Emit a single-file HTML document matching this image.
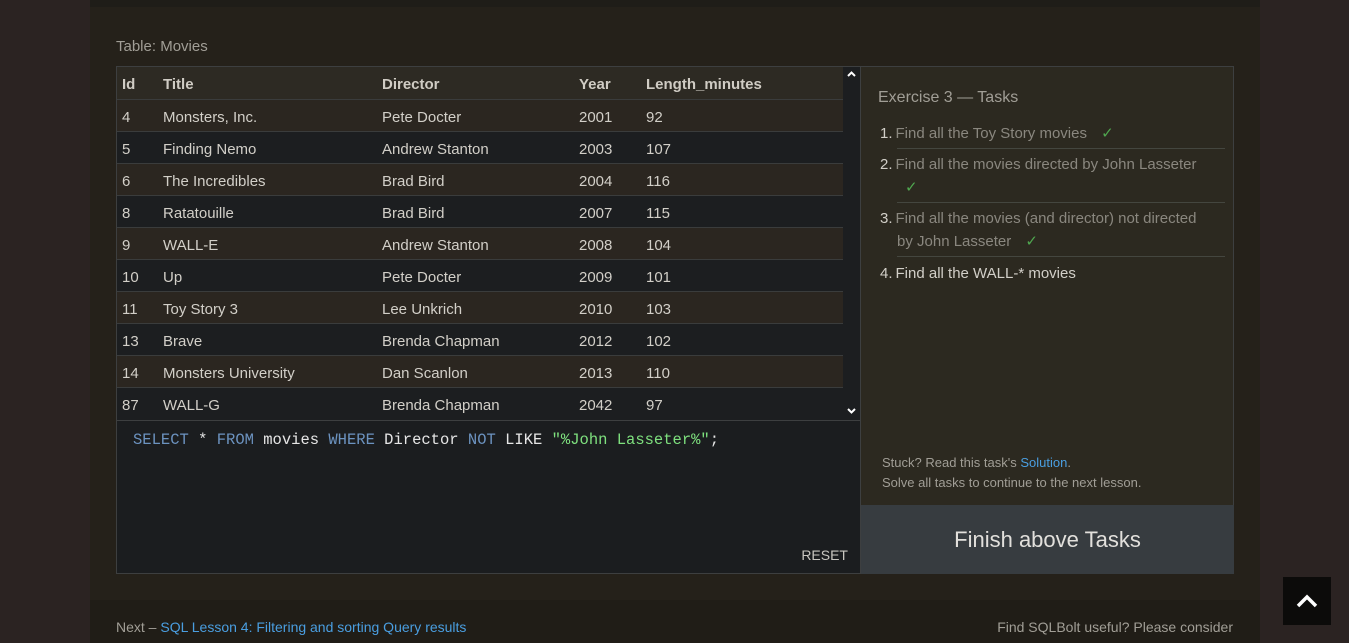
<!DOCTYPE html>
<html><head><style>
*{margin:0;padding:0;box-sizing:border-box}
body{width:1349px;height:643px;overflow:hidden;background:#2b2322;font-family:"Liberation Sans",sans-serif;position:relative}
.main{position:absolute;left:90px;top:0;width:1170px;height:643px;background:#25211a}
.topband{position:absolute;left:90px;top:0;width:1170px;height:7px;background:#1f1d18}
.foot{position:absolute;left:90px;top:600px;width:1170px;height:43px;background:#201d17}
.lbl{position:absolute;left:116px;top:38px;color:#a19e96;font-size:15px}
.tbl{position:absolute;left:116px;top:66px;width:745px;height:355px;border:1px solid #3d3f40;background:#1c1e20;overflow:hidden}
.row{position:absolute;left:0;width:726px;height:32px;border-bottom:1px solid #3a3c3c;color:#d2cfc8;font-size:15px}
.row span{position:absolute;top:9px}
.hd{background:#2d2a23;font-weight:bold;color:#d0ccc4;top:0;height:33px}
.odd{background:#2b2620}.even{background:#1c1e20}
.sb{position:absolute;left:726px;top:0;width:17px;height:355px;background:#1c1e20}
.ed{position:absolute;left:116px;top:420px;width:745px;height:154px;border:1px solid #3d3f40;background:#1b1d1f;font-family:"Liberation Mono",monospace;font-size:15.5px}
.code{position:absolute;left:16px;top:10px;color:#e6e6e6;white-space:pre}
.k{color:#6c93c0}.s{color:#7ee07e}
.reset{position:absolute;right:12px;bottom:10px;font-family:"Liberation Sans",sans-serif;font-size:14px;color:#c8c6c0}
.tp{position:absolute;left:861px;top:66px;width:373px;height:440px;background:#2c2920;border:1px solid #3d3f40;border-left:none;border-bottom:none}
.tp h3{position:absolute;left:17px;top:22px;font-weight:normal;font-size:16px;color:#a19e96}
.t{position:absolute;left:19px;width:345px;font-size:15px;color:#8a877f;line-height:23px}
.t b{font-weight:normal;color:#d2cfc8;margin-right:3px}
.t i{font-style:normal;padding-left:17px;display:block}
.t .ck{color:#4fa64f;margin-left:10px}
.ln{position:absolute;left:36px;width:328px;height:1px;background:#44463f}
.stuck{position:absolute;left:21px;top:386px;font-size:13px;color:#a19e96;line-height:20px}
.stuck a{color:#4a9ee0}
.btn{position:absolute;left:861px;top:505px;width:373px;height:69px;background:#373c40;color:#e2e0dc;font-size:22px;text-align:center;line-height:69px}
.f1{position:absolute;left:116px;top:619px;font-size:14px;color:#a19e96}
.f1 a,.f2 a{color:#4a9ee0}
.f2{position:absolute;right:116px;top:619px;font-size:14px;color:#a19e96}
.up{position:absolute;left:1283px;top:577px;width:48px;height:48px;background:#0c0b0a}
</style></head><body>
<div class="main"></div><div class="topband"></div><div class="foot"></div>
<div class="lbl">Table: Movies</div>
<div class="tbl">
<div class="row hd"><span style="left:5px">Id</span><span style="left:46px">Title</span><span style="left:265px">Director</span><span style="left:462px">Year</span><span style="left:529px">Length_minutes</span></div>
<div class="row odd" style="top:33px"><span style="left:5px">4</span><span style="left:46px">Monsters, Inc.</span><span style="left:265px">Pete Docter</span><span style="left:462px">2001</span><span style="left:529px">92</span></div>
<div class="row even" style="top:65px"><span style="left:5px">5</span><span style="left:46px">Finding Nemo</span><span style="left:265px">Andrew Stanton</span><span style="left:462px">2003</span><span style="left:529px">107</span></div>
<div class="row odd" style="top:97px"><span style="left:5px">6</span><span style="left:46px">The Incredibles</span><span style="left:265px">Brad Bird</span><span style="left:462px">2004</span><span style="left:529px">116</span></div>
<div class="row even" style="top:129px"><span style="left:5px">8</span><span style="left:46px">Ratatouille</span><span style="left:265px">Brad Bird</span><span style="left:462px">2007</span><span style="left:529px">115</span></div>
<div class="row odd" style="top:161px"><span style="left:5px">9</span><span style="left:46px">WALL-E</span><span style="left:265px">Andrew Stanton</span><span style="left:462px">2008</span><span style="left:529px">104</span></div>
<div class="row even" style="top:193px"><span style="left:5px">10</span><span style="left:46px">Up</span><span style="left:265px">Pete Docter</span><span style="left:462px">2009</span><span style="left:529px">101</span></div>
<div class="row odd" style="top:225px"><span style="left:5px">11</span><span style="left:46px">Toy Story 3</span><span style="left:265px">Lee Unkrich</span><span style="left:462px">2010</span><span style="left:529px">103</span></div>
<div class="row even" style="top:257px"><span style="left:5px">13</span><span style="left:46px">Brave</span><span style="left:265px">Brenda Chapman</span><span style="left:462px">2012</span><span style="left:529px">102</span></div>
<div class="row odd" style="top:289px"><span style="left:5px">14</span><span style="left:46px">Monsters University</span><span style="left:265px">Dan Scanlon</span><span style="left:462px">2013</span><span style="left:529px">110</span></div>
<div class="row even" style="top:321px;border:none;height:34px"><span style="left:5px;top:9px">87</span><span style="left:46px;top:9px">WALL-G</span><span style="left:265px;top:9px">Brenda Chapman</span><span style="left:462px;top:9px">2042</span><span style="left:529px;top:9px">97</span></div>
<div class="sb"><svg width="17" height="355"><path d="M5 9 L8.5 5.5 L12 9" stroke="#fff" stroke-width="2" fill="none"/><path d="M5 342 L8.5 345.5 L12 342" stroke="#fff" stroke-width="2" fill="none"/></svg></div>
</div>
<div class="ed"><div class="code"><span class="k">SELECT</span> * <span class="k">FROM</span> movies <span class="k">WHERE</span> Director <span class="k">NOT</span> LIKE <span class="s">"%John Lasseter%"</span>;</div><div class="reset">RESET</div></div>
<div class="tp">
<h3>Exercise 3 — Tasks</h3>
<div class="t" style="top:55px"><b>1.</b>Find all the Toy Story movies <span class="ck">✓</span></div>
<div class="ln" style="top:81px"></div>
<div class="t" style="top:86px"><b>2.</b>Find all the movies directed by John Lasseter<i><span class="ck" style="margin-left:8px">✓</span></i></div>
<div class="ln" style="top:135px"></div>
<div class="t" style="top:140px"><b>3.</b>Find all the movies (and director) not directed<i>by John Lasseter <span class="ck">✓</span></i></div>
<div class="ln" style="top:189px"></div>
<div class="t" style="top:195px;color:#d2cfc8"><b>4.</b>Find all the WALL-* movies</div>
<div class="stuck">Stuck? Read this task's <a>Solution</a>.<br>Solve all tasks to continue to the next lesson.</div>
</div>
<div class="btn">Finish above Tasks</div>
<div class="f1">Next – <a>SQL Lesson 4: Filtering and sorting Query results</a></div>
<div class="f2">Find SQLBolt useful? Please consider</div>
<div class="up"><svg width="48" height="48"><path d="M15 29 L24 20 L33 29" stroke="#fff" stroke-width="3.5" fill="none"/></svg></div>
</body></html>
